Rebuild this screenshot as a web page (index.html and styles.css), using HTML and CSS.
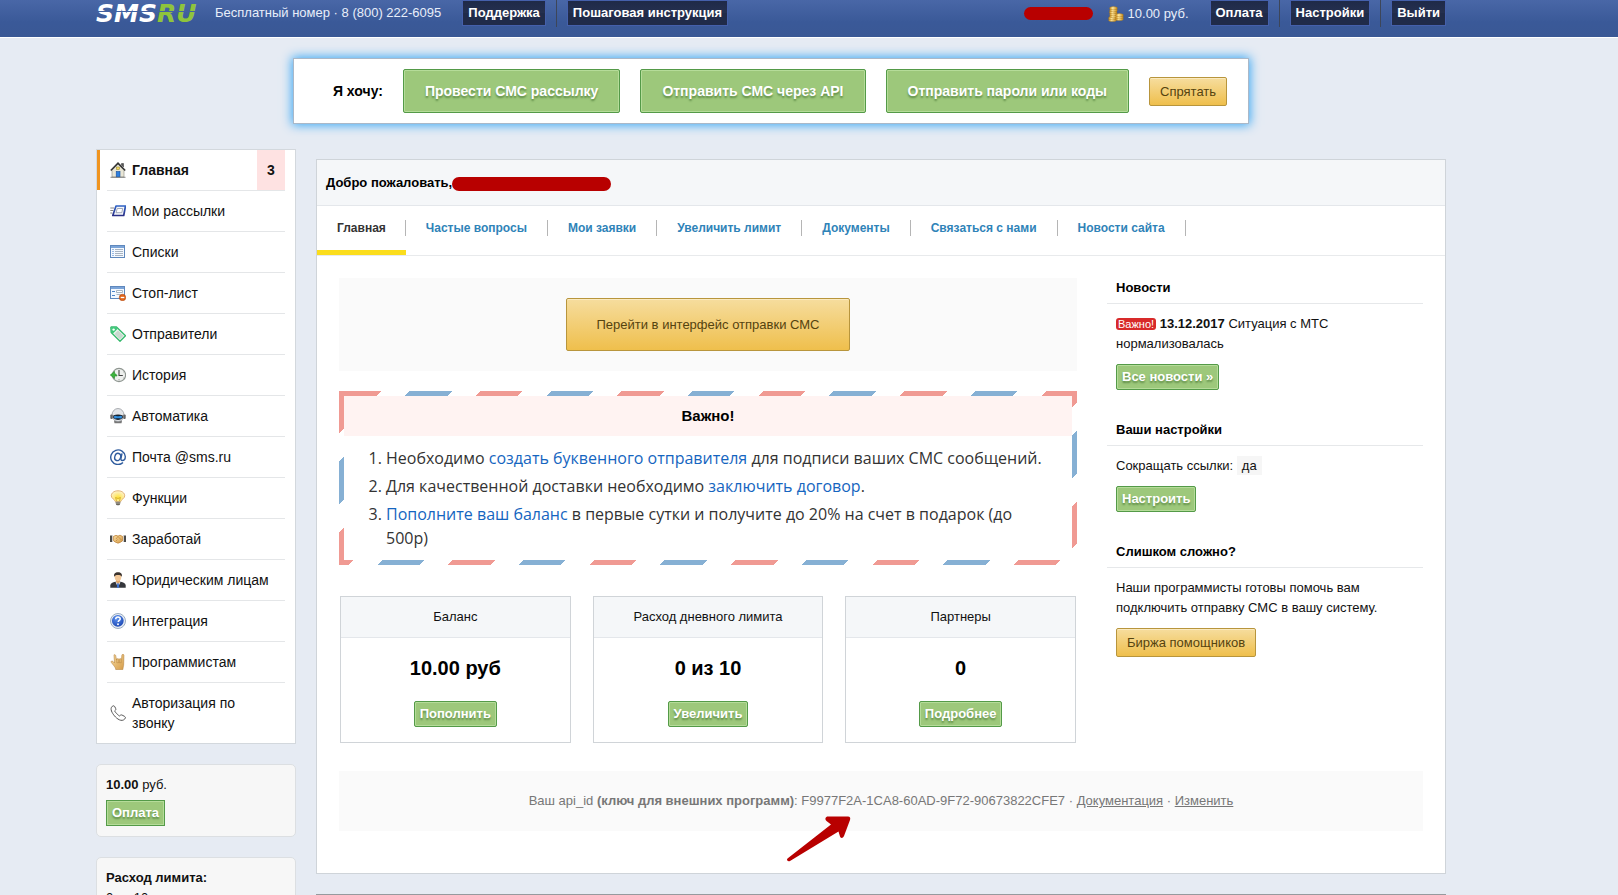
FILE: index.html
```html
<!DOCTYPE html>
<html lang="ru">
<head>
<meta charset="utf-8">
<title>SMS.RU</title>
<link rel="stylesheet" href="styles.css">
</head>
<body>
<svg class="defs" width="0" height="0" aria-hidden="true">
  <defs>
    <linearGradient id="gold" x1="0" y1="0" x2="1" y2="0"><stop offset="0" stop-color="#c98d1c"/><stop offset=".4" stop-color="#ffe9a0"/><stop offset="1" stop-color="#c08416"/></linearGradient>
    <linearGradient id="blue" x1="0" y1="0" x2="0" y2="1"><stop offset="0" stop-color="#2f62c4"/><stop offset="1" stop-color="#2a2f86"/></linearGradient>
    <linearGradient id="skin" x1="0" y1="0" x2="1" y2="1"><stop offset="0" stop-color="#f8dca0"/><stop offset="1" stop-color="#d49b48"/></linearGradient>
    <radialGradient id="bulb" cx=".5" cy=".6" r=".6"><stop offset="0" stop-color="#ffe23c"/><stop offset="1" stop-color="#fdf3d4"/></radialGradient>
    <radialGradient id="orb" cx=".4" cy=".3" r=".8"><stop offset="0" stop-color="#5d93f0"/><stop offset="1" stop-color="#1640ae"/></radialGradient>
  </defs>
</svg>

<header class="topbar">
  <a class="logo" href="#">SMS<span class="logo-ru">RU</span></a>
  <span class="phone">Бесплатный номер · 8 (800) 222-6095</span>
  <nav class="topnav">
    <button class="dark-btn">Поддержка</button>
    <button class="dark-btn">Пошаговая инструкция</button>
  </nav>
  <div class="account">
    <span class="mask mask-user"></span>
    <svg class="coins" width="16" height="16" viewBox="0 0 16 16">
      <g fill="url(#gold)" stroke="#a8730f" stroke-width=".4">
        <ellipse cx="4.5" cy="14" rx="4" ry="1.6"/><ellipse cx="4.5" cy="12.2" rx="4" ry="1.6"/>
        <ellipse cx="5.5" cy="10.2" rx="3.9" ry="1.6"/><ellipse cx="5.5" cy="8.2" rx="3.9" ry="1.6"/><ellipse cx="5.2" cy="6.2" rx="3.9" ry="1.6"/><ellipse cx="5.5" cy="4.2" rx="3.9" ry="1.6"/><ellipse cx="5.5" cy="2.2" rx="3.9" ry="1.6"/>
        <ellipse cx="11.5" cy="13" rx="3.9" ry="1.6"/><ellipse cx="11.5" cy="11.2" rx="3.9" ry="1.6"/><ellipse cx="11.5" cy="9.2" rx="3.9" ry="1.6"/>
      </g>
    </svg>
    <span class="sum">10.00 руб.</span>
  </div>
  <nav class="topnav">
    <button class="dark-btn">Оплата</button>
    <button class="dark-btn">Настройки</button>
    <button class="dark-btn">Выйти</button>
  </nav>
</header>

<div class="page">
  <section class="want">
    <b class="want-label">Я хочу:</b>
    <button class="green big">Провести СМС рассылку</button>
    <button class="green big">Отправить СМС через API</button>
    <button class="green big">Отправить пароли или коды</button>
    <button class="gold">Спрятать</button>
  </section>

  <div class="columns">
    <aside class="side">
      <ul class="menu">
        <li class="active"><a href="#"><svg class="ico" viewBox="0 0 16 16"><path d="M11.500 1.500h2V5l-2-2z" fill="#555" stroke="#333" stroke-width=".5"/><path d="M2 8.200 8 2l6 6.200V15H2z" fill="#e9e6d6" stroke="#8b8a80" stroke-width=".6"/><path d="M.8 8.500 8 1.200l7.200 7.300" fill="none" stroke="#333" stroke-width="1.600"/><rect x="6.500" y="5" width="3" height="2.600" fill="#f4d95c" stroke="#8a7b30" stroke-width=".5"/><rect x="6.200" y="9.500" width="3.800" height="5.500" fill="#2d7fe0" stroke="#174f9c" stroke-width=".6"/><path d="M.5 15.300h15" stroke="#777" stroke-width=".9"/></svg><span>Главная</span><span class="badge">3</span></a></li>
        <li><a href="#"><svg class="ico" viewBox="0 0 16 16"><path d="M.3 5H4M.3 7.500h3M.3 10h2" stroke="#777" stroke-width=".9"/><path d="M6 3h9.500L13.700 12.500H2.800z" fill="#f4f6fb" stroke="url(#blue)" stroke-width="1.700" stroke-linejoin="round"/><path d="M7.300 5.500h5.400l-.9 4.200H6z" fill="#fff" stroke="#8a93a8" stroke-width=".8"/></svg><span>Мои рассылки</span></a></li>
        <li><a href="#"><svg class="ico" viewBox="0 0 16 16"><rect x=".5" y="1.500" width="14" height="12" fill="#f5f9fe" stroke="#5f88bd"/><path d="M1 2h13v2H1z" fill="#7ba4d8"/><path d="M2.500 5.500h1m-1 2h1m-1 2h1m-1 2h1" stroke="#3d7ccc"/><path d="M5 5.500h8m-8 2h8m-8 2h8m-8 2h8" stroke="#a8b4c2"/></svg><span>Списки</span></a></li>
        <li><a href="#"><svg class="ico" viewBox="0 0 16 16"><rect x=".5" y="1.500" width="14" height="12" fill="#f3f8fe" stroke="#5f88bd"/><path d="M1 2h13v2H1z" fill="#7ba4d8"/><path d="M2 6.500h3m-3 4h3" stroke="#4d84c8"/><path d="M6.500 5.500h6v2h-6zm0 4h4" fill="#fff" stroke="#a8b4c2"/><circle cx="12.500" cy="12.500" r="3.200" fill="#e3671c" stroke="#b0440b" stroke-width=".6"/><path d="M10.700 12.500h3.600" stroke="#fff" stroke-width="1.300"/></svg><span>Стоп-лист</span></a></li>
        <li><a href="#"><svg class="ico" viewBox="0 0 16 16"><path d="M.8 1.500 1.500.8l5 .2 9 8.700-5.500 5.600L1.200 6.500z" fill="#e9f7ee" stroke="#35b96c" stroke-width="1.300" stroke-linejoin="round"/><path d="M1.200 1.200h5L7.500 3 3 7.500 1.200 6z" fill="#3cc878"/><path d="m8 4.500 5.500 5.200-3.600 3.600-5.500-5.200z" fill="#c9d8cf"/><circle cx="3.600" cy="3.600" r="1.200" fill="#fff"/></svg><span>Отправители</span></a></li>
        <li><a href="#"><svg class="ico" viewBox="0 0 16 16"><circle cx="9" cy="8" r="6.600" fill="#eef0ee" stroke="#8f9691" stroke-width="1.100"/><path d="M9 3v5.500h3.800" fill="none" stroke="#444" stroke-width="1.100"/><path d="M9 12.200v1.200M13.500 5l.6-.4M13.500 11l.6.500" stroke="#777" stroke-width=".8"/><path d="M.3 8 4.500 4.500v2.200c1.500.2 2.300 1 2.500 2.300H4.500v2.500z" fill="#3db53d" stroke="#1d8424" stroke-width=".6"/></svg><span>История</span></a></li>
        <li><a href="#"><svg class="ico" viewBox="0 0 16 16"><path d="M4 12.500h8l-.5 2.700h-7z" fill="#777"/><ellipse cx="8" cy="7" rx="6" ry="6.500" fill="#e3e5e8" stroke="#8b8f94" stroke-width=".7"/><rect x=".3" y="6.500" width="2.400" height="4.500" rx="1" fill="#666"/><rect x="13.300" y="6.500" width="2.400" height="4.500" rx="1" fill="#666"/><path d="M3.200 7.500q4.800-2 9.600 0v2.500Q8 14 3.200 10z" fill="#17202c"/><path d="M4 8.300q1.300-1 3 0h2q1.700-1 3 0l-.2 1.600q-.8.900-2.300.3h-3q-1.500.6-2.300-.3z" fill="#2f8fe0"/></svg><span>Автоматика</span></a></li>
        <li><a href="#"><svg class="ico" viewBox="0 0 16 16" fill="none" stroke="#2f5c9e" stroke-width="1.400"><path d="M13 13.600A7.300 7.300 0 1 1 15.300 7.500c0 2.300-1.300 4-3 4-1.200 0-1.600-1-1.300-2.200l1-5"/><ellipse cx="7.700" cy="8" rx="2.900" ry="3.700" transform="rotate(18 7.700 8)"/></svg><span>Почта @sms.ru</span></a></li>
        <li><a href="#"><svg class="ico" viewBox="0 0 16 16"><path d="M8 .8c4 0 6.700 2.200 6.700 5 0 2.700-3.500 3.500-4.200 6h-5c-.7-2.500-4.200-3.300-4.200-6 0-2.800 2.700-5 6.700-5z" fill="url(#bulb)" stroke="#dda868" stroke-width=".9"/><path d="M6.500 11 5.600 7.500 8 8.500l2.400-1L9.500 11" fill="none" stroke="#c99c12" stroke-width=".7"/><path d="M5.500 11.700h5l-.6 3q-1.900 1.300-3.800 0z" fill="#6a665c"/><path d="M5.600 13h4.800" stroke="#d0cdc4" stroke-width=".7"/></svg><span>Функции</span></a></li>
        <li><a href="#"><svg class="ico" viewBox="0 0 16 16"><path d="M0 4.500h2.500v6.500H0zM13.500 4.500H16v6.500h-2.500z" fill="#4a4a48"/><path d="M2.300 4.700h1v6h-1zm10.400 0h1v6h-1z" fill="#eee"/><path d="M3.300 5.500 6 4.300l2 .8 2-.9 2.700 1.300v4.200l-2.200 1.500-2.500 1-3-1.300-1.700-1.400z" fill="url(#skin)" stroke="#b9782b" stroke-width=".7"/><path d="m6 8 2-2.500 3.700 3.800M6 10l1.500-1.500" fill="none" stroke="#b9782b" stroke-width=".6"/></svg><span>Заработай</span></a></li>
        <li><a href="#"><svg class="ico" viewBox="0 0 16 16"><path d="M.3 15.800v-2.300c0-2 2.500-3.200 5-3.700h5.400c2.500.5 5 1.700 5 3.700v2.300z" fill="#35373c"/><path d="m5.500 9.800 2.500 6 2.500-6z" fill="#e8eefb"/><path d="m7.300 11 .7-.7.700.7.500 4.800H6.800z" fill="#3a6fd0"/><path d="M6 7.500h4v2.700l-2 1.500-2-1.500z" fill="#dda468"/><ellipse cx="8" cy="5" rx="3.300" ry="4" fill="#f2c797"/><path d="M4.200 5C3.500 1.800 5 .2 8 .2s4.500 1.600 3.800 4.800C11.500 3.500 10 3 8 3s-3.500.5-3.800 2z" fill="#3b332e"/></svg><span>Юридическим лицам</span></a></li>
        <li><a href="#"><svg class="ico" viewBox="0 0 16 16"><circle cx="8" cy="8" r="7.500" fill="#e9eef5" stroke="#8fa3ba" stroke-width=".9"/><circle cx="7.800" cy="7.800" r="5.900" fill="url(#orb)"/><path d="M5.700 6.300q.1-2.200 2.300-2.200t2.200 1.900c0 1.300-1.900 1.400-2 3" fill="none" stroke="#fff" stroke-width="1.500"/><circle cx="8" cy="11.300" r=".95" fill="#fff"/></svg><span>Интеграция</span></a></li>
        <li><a href="#"><svg class="ico" viewBox="0 0 16 16"><path d="M4 .8c.8-.4 1.500 0 1.700.8L6.500 6l.3-1.200h1.700l.5.600.5-.6h1.600l.4.500.4-4.300c.1-.9 2-.9 2 .2l-.2 8.800c0 2.500-.7 3.200-.8 5.500H5.700c-.2-2-1-2.500-2-4L1.200 8.300c-.5-1 .7-1.800 1.600-1L4.500 9z" fill="url(#skin)" stroke="#b88743" stroke-width=".6"/><path d="M6.700 5.500v3.200h2.200V5.500m.3 0v3.200h2.100V5.500" fill="none" stroke="#b88743" stroke-width=".5"/></svg><span>Программистам</span></a></li>
        <li><a href="#"><svg class="ico" viewBox="0 0 16 16" fill="none" stroke="#555" stroke-width="1"><path d="M2.300 1.300c1.200-.9 2-.5 2.600.6l.8 1.700c.4 1-.1 1.500-.9 2.200-.5.600 4.200 5.500 4.900 5.100.8-.8 1.400-1.300 2.400-.8l2.300 1.200c1.300.8 1.300 1.600.4 2.600-3.100 3.600-8-.2-10.300-3C2.300 8.200-.6 3.800 2.300 1.300z"/></svg><span>Авторизация по звонку</span></a></li>
      </ul>
      <section class="box">
        <div><b>10.00</b> руб.</div>
        <button class="green square">Оплата</button>
      </section>
      <section class="box">
        <b>Расход лимита:</b>
        <div>0 из 10</div>
      </section>
    </aside>

    <div class="main-col">
      <main class="panel">
        <h1 class="panel-head">Добро пожаловать,<span class="mask mask-name"></span></h1>
        <nav class="tabs">
          <a class="tab current" href="#"><span>Главная</span></a>
          <a class="tab" href="#"><span>Частые вопросы</span></a>
          <a class="tab" href="#"><span>Мои заявки</span></a>
          <a class="tab" href="#"><span>Увеличить лимит</span></a>
          <a class="tab" href="#"><span>Документы</span></a>
          <a class="tab" href="#"><span>Связаться с нами</span></a>
          <a class="tab" href="#"><span>Новости сайта</span></a>
        </nav>
        <div class="content">
          <div class="left">
            <div class="cta"><button class="gold cta-btn">Перейти в интерфейс отправки СМС</button></div>
            <section class="letter">
              <h2 class="letter-head">Важно!</h2>
              <ol class="letter-list">
                <li>Необходимо <a href="#">создать буквенного отправителя</a> для подписи ваших СМС сообщений.</li>
                <li>Для качественной доставки необходимо <a href="#">заключить договор</a>.</li>
                <li><a href="#">Пополните ваш баланс</a> в первые сутки и получите до 20% на счет в подарок (до 500р)</li>
              </ol>
            </section>
            <div class="cards">
              <section class="card"><h3 class="card-head">Баланс</h3><div class="card-body"><b class="value">10.00 руб</b><button class="green">Пополнить</button></div></section>
              <section class="card"><h3 class="card-head">Расход дневного лимита</h3><div class="card-body"><b class="value">0 из 10</b><button class="green">Увеличить</button></div></section>
              <section class="card"><h3 class="card-head">Партнеры</h3><div class="card-body"><b class="value">0</b><button class="green">Подробнее</button></div></section>
            </div>
          </div>
          <div class="right">
            <section class="info">
              <h3 class="info-head">Новости</h3>
              <div class="info-body"><p><span class="hot">Важно!</span> <b>13.12.2017</b> Ситуация с МТС нормализовалась</p><button class="green">Все новости »</button></div>
            </section>
            <section class="info">
              <h3 class="info-head">Ваши настройки</h3>
              <div class="info-body"><p>Сокращать ссылки: <span class="yes">да</span></p><button class="green">Настроить</button></div>
            </section>
            <section class="info">
              <h3 class="info-head">Слишком сложно?</h3>
              <div class="info-body"><p>Наши программисты готовы помочь вам подключить отправку СМС в вашу систему.</p><button class="gold">Биржа помощников</button></div>
            </section>
          </div>
        </div>
        <div class="api">Ваш api_id <b>(ключ для внешних программ)</b>: F9977F2A-1CA8-60AD-9F72-90673822CFE7 · <a href="#">Документация</a> · <a href="#">Изменить</a>
          <svg class="arrow" width="68" height="50" viewBox="0 0 68 50"><path d="M2.500 45.500 46 11.500l-4.500-3.500c-2-2-1-4.500 1.500-4.500H63c2 0 2.700 1.500 2 3.500L59 23c-1 2.500-3.500 2.500-4 .5l-1.500-5L5 48c-2 1-4-1-2.500-2.500z" fill="#b80000"/></svg>
        </div>
      </main>
      <hr class="rule">
    </div>
  </div>
</div>
</body>
</html>
```

FILE: styles.css
```css
* { box-sizing: border-box; }
html, body { height: 100%; }
body {
  margin: 0;
  overflow: hidden;
  background: #e6ebf3;
  color: #111;
  font: 13px/20px "Liberation Sans", Arial, sans-serif;
}
h1, h2, h3, p, ul, ol { margin: 0; padding: 0; }
a { text-decoration: none; }
button { margin: 0; font-family: inherit; cursor: pointer; white-space: nowrap; }
.defs { position: absolute; }

/* Top bar */
.topbar {
  display: flex;
  align-items: flex-start;
  height: 38px;
  padding: 0 172px 0 96px;
  border-bottom: 1px solid #fff;
  background: linear-gradient(#4967a7, #3a5998 60%, #3a5895);
  color: #e8eefa;
  line-height: 26px;
  white-space: nowrap;
}
.logo {
  position: relative;
  width: 119px;
  color: #fff;
  font: italic bold 25px/28px "DejaVu Sans", sans-serif;
}
.logo::after {
  content: "";
  position: absolute;
  left: 0;
  top: 11px;
  width: 100px;
  height: 1px;
  background: #4261a1;
}
.logo-ru { color: #8fc43c; }
.phone { margin-right: 21px; }
.topnav { display: flex; }
.dark-btn {
  position: relative;
  height: 26px;
  padding: 0 5px 2px;
  border: 1px solid #4560ab;
  background: linear-gradient(#1f2a48, #25304f 50%, #202b49 51%);
  color: #fff;
  font-weight: bold;
  font-size: 13px;
}
.dark-btn + .dark-btn { margin-left: 21px; }
.dark-btn + .dark-btn::before {
  content: "";
  position: absolute;
  left: -12px;
  top: -1px;
  width: 1px;
  height: 27px;
  background: #3d4659;
}
.account { display: flex; align-items: center; height: 27px; margin-left: auto; margin-right: 21px; }
.mask { background: #b80000; border-radius: 7px; }
.mask-user { width: 69px; height: 13px; margin-right: 15px; }
.coins { margin-right: 4px; }

/* Buttons */
.green {
  height: 26px;
  padding: 0 5px 2px;
  border: 1px solid #549a48;
  border-radius: 2px;
  background: #9dc87b;
  box-shadow: inset 0 0 0 1px #b5dc99;
  color: #fff;
  font-weight: bold;
  font-size: 13px;
  text-shadow: 0 2px 2px #5d8a46;
}
.green.square { border-radius: 0; }
.green.big { height: 44px; padding: 0 21px; font-size: 14px; }
.gold {
  height: 29px;
  padding: 0 10px;
  border: 1px solid #b8953c;
  border-radius: 2px;
  background: linear-gradient(#f6dd9e, #efbf4c);
  box-shadow: inset 0 1px 0 #fbeabf;
  color: #55430f;
  font-size: 13px;
}

/* Layout */
.page { padding: 20px 172px 0 96px; }
.want {
  display: flex;
  align-items: center;
  gap: 20px;
  width: fit-content;
  margin: 0 auto 25px;
  padding: 10px 21px 10px 39px;
  border: 1px solid #aab8c8;
  background: #fff;
  box-shadow: 0 0 10px 1px #35a6f5;
}
.want-label { font-size: 14px; color: #000; }
.columns { display: flex; align-items: flex-start; gap: 20px; }
.side { flex: none; width: 200px; }
.main-col { flex: 1; min-width: 0; padding-top: 10px; }

/* Side menu */
.menu {
  padding: 0 10px;
  border: 1px solid #d3d8dd;
  background: #fff;
  list-style: none;
  font-size: 14px;
}
.menu li { position: relative; border-bottom: 1px solid #e4e6e8; }
.menu li:last-child { padding-right: 10px; border-bottom: 0; }
.menu a { display: flex; align-items: center; gap: 6px; padding: 10px 0 10px 3px; color: #111; }
.ico { flex: none; width: 16px; height: 16px; }
.active { font-weight: bold; }
.active::before {
  content: "";
  position: absolute;
  left: -10px;
  top: 0;
  width: 3px;
  height: 40px;
  background: #f0941f;
}
.badge {
  width: 28px;
  margin: -10px 0 -10px auto;
  background: #fee2e2;
  line-height: 40px;
  text-align: center;
}
.box {
  margin-top: 20px;
  padding: 10px 9px;
  border: 1px solid #dcdfe2;
  border-radius: 5px;
  background: #f7f7f7;
}
.box .green { display: block; margin-top: 5px; }

/* Main panel */
.panel { border: 1px solid #cfd4d9; background: #fff; }
.panel-head {
  display: flex;
  align-items: center;
  height: 46px;
  padding-left: 9px;
  border-bottom: 1px solid #e4e7eb;
  background: #f5f7f9;
  color: #000;
  font-size: 13px;
}
.mask-name { width: 159px; height: 14px; margin-top: 3px; }
.tabs { display: flex; border-bottom: 1px solid #e8eaec; font-size: 12px; font-weight: bold; }
.tab { padding: 14px 0; color: #2f83b8; border-bottom: 5px solid transparent; }
.tab span { display: block; padding: 1px 19px 0 20px; line-height: 15px; border-right: 1px solid #b5b5b5; }
.tab + .tab span { padding-right: 20px; }
.current { color: #333; border-bottom-color: #fbdd1c; }
.content {
  display: grid;
  grid-template-columns: minmax(0, 1fr) 316px;
  gap: 30px;
  padding: 22px 22px 28px;
}
.cta { padding: 20px; background: #fafafa; text-align: center; }
.cta-btn { height: 53px; padding: 0 30px; vertical-align: top; }
.letter {
  margin: 20px 0 31px;
  border: 5px solid transparent;
  border-image: repeating-linear-gradient(135deg, #f09a93 0 30px, transparent 0 50px, #86b0d4 0 80px, transparent 0 100px) 5;
}
.letter-head {
  background: #fff3f2;
  color: #000;
  font-size: 15px;
  line-height: 40px;
  text-align: center;
}
.letter-list {
  padding: 10px 20px 10px 42px;
  color: #333;
  font: 16px/24px "Open Sans", sans-serif;
}
.letter-list li + li { margin-top: 4px; }
.letter-list a { color: #1565c0; }
.cards { display: grid; grid-template-columns: repeat(3, 1fr); gap: 22px; padding: 0 1px; }
.card { border: 1px solid #d0d4d8; text-align: center; }
.card-head {
  border-bottom: 1px solid #e4e7eb;
  background: #f5f7f9;
  font-size: 13px;
  font-weight: normal;
  line-height: 40px;
}
.card-body { display: flex; flex-direction: column; align-items: center; gap: 18px; padding: 15px; }
.value { color: #000; font-size: 20px; line-height: 30px; }

/* Right column */
.info { margin-bottom: 30px; }
.info-head { padding: 0 9px 5px; border-bottom: 1px solid #e6e8ea; color: #000; font-size: 13px; }
.info-body { padding: 10px 9px 0; }
.info-body p { margin-bottom: 10px; }
.info-body button { display: block; }
.hot { display: inline-block; padding: 0 2px; border-radius: 3px; background: #d82a2a; color: #fff; font-size: 11px; line-height: 12px; }
.yes { padding: 2px 5px; background: #f6f6f6; }

/* API key */
.api {
  position: relative;
  margin: 0 22px 42px;
  background: #fafafa;
  color: #777;
  line-height: 60px;
  text-align: center;
}
.api a { color: #777; text-decoration: underline; }
.arrow { position: absolute; left: 446px; top: 42px; }
.rule { margin: 20px 0 0; border: 0; border-top: 1px solid #969a9e; }
```
